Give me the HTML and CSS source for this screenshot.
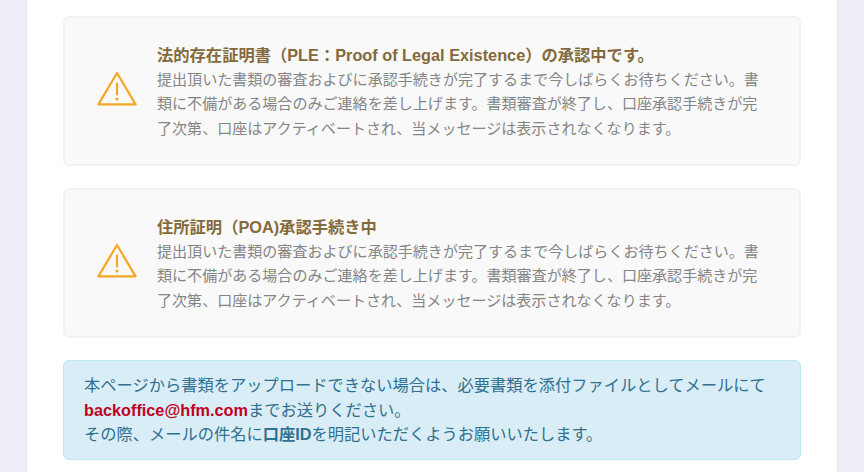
FILE: index.html
```html
<!DOCTYPE html>
<html lang="ja">
<head>
<meta charset="utf-8">
<title>書類承認</title>
<link rel="stylesheet" href="styles.css">
</head>
<body>
<main class="panel">
  <section class="notice">
    <svg class="notice-icon" viewBox="0 0 40 36" aria-hidden="true"><path class="tri" d="M20 2 L38.6 33.4 H1.4 Z"/><path class="bang" d="M20 12.5 V23.5"/><circle class="dot" cx="20" cy="28" r="1.6"/></svg>
    <div class="notice-body">
      <h2 class="notice-title">法的存在証明書（PLE：Proof of Legal Existence）の承認中です。</h2>
      <p class="notice-text">提出頂いた書類の審査およびに承認手続きが完了するまで今しばらくお待ちください。書類に不備がある場合のみご連絡を差し上げます。書類審査が終了し、口座承認手続きが完了次第、口座はアクティベートされ、当メッセージは表示されなくなります。</p>
    </div>
  </section>
  <section class="notice">
    <svg class="notice-icon" viewBox="0 0 40 36" aria-hidden="true"><path class="tri" d="M20 2 L38.6 33.4 H1.4 Z"/><path class="bang" d="M20 12.5 V23.5"/><circle class="dot" cx="20" cy="28" r="1.6"/></svg>
    <div class="notice-body">
      <h2 class="notice-title">住所証明（POA)承認手続き中</h2>
      <p class="notice-text">提出頂いた書類の審査およびに承認手続きが完了するまで今しばらくお待ちください。書類に不備がある場合のみご連絡を差し上げます。書類審査が終了し、口座承認手続きが完了次第、口座はアクティベートされ、当メッセージは表示されなくなります。</p>
    </div>
  </section>
  <section class="info">
    本ページから書類をアップロードできない場合は、必要書類を添付ファイルとしてメールにて<br>
    <a class="mail" href="#">backoffice@hfm.com</a>までお送りください。<br>
    その際、メールの件名に<strong>口座ID</strong>を明記いただくようお願いいたします。
  </section>
</main>
</body>
</html>
```
FILE: styles.css
```css
* { box-sizing: border-box; }
html, body { margin: 0; height: 100%; }
body {
  background: #eeeef9;
  font-family: "Liberation Sans", "Noto Sans CJK JP", sans-serif;
  overflow: hidden;
}
.panel {
  width: 810px;
  height: 472px;
  margin-left: 27px;
  padding: 16px 36px 0;
  background: #fff;
  box-shadow: 0 0 1px rgba(0, 0, 0, .18);
  display: flex;
  flex-direction: column;
  gap: 22px;
}
.notice {
  height: 150px;
  display: flex;
  align-items: center;
  gap: 20px;
  padding: 0 32px;
  background: #f9f9f9;
  border: 2px solid #f2f2f3;
  border-radius: 6px;
}
.notice-icon { width: 40px; height: 36px; flex: none; margin-top: -5px; }
.tri, .bang { fill: none; stroke: #f5a623; stroke-width: 2.2; stroke-linejoin: round; stroke-linecap: round; }
.dot { fill: #f5a623; }
.notice-body { flex: 1; padding-top: 2px; }
.notice-title { margin: 0; font-size: 16.3px; line-height: 25px; font-weight: 700; color: #84693b; }
.notice-text { margin: 0; font-size: 15.05px; line-height: 24.5px; color: #858585; }
.info {
  height: 100px;
  padding: 12px 20px 0;
  background: #d9edf7;
  border: 1px solid #bce8f1;
  border-radius: 6px;
  font-size: 16.25px;
  line-height: 24.5px;
  color: #31708f;
}
.mail { color: #c00020; font-weight: 700; text-decoration: none; }
.info strong { font-weight: 700; }
```
